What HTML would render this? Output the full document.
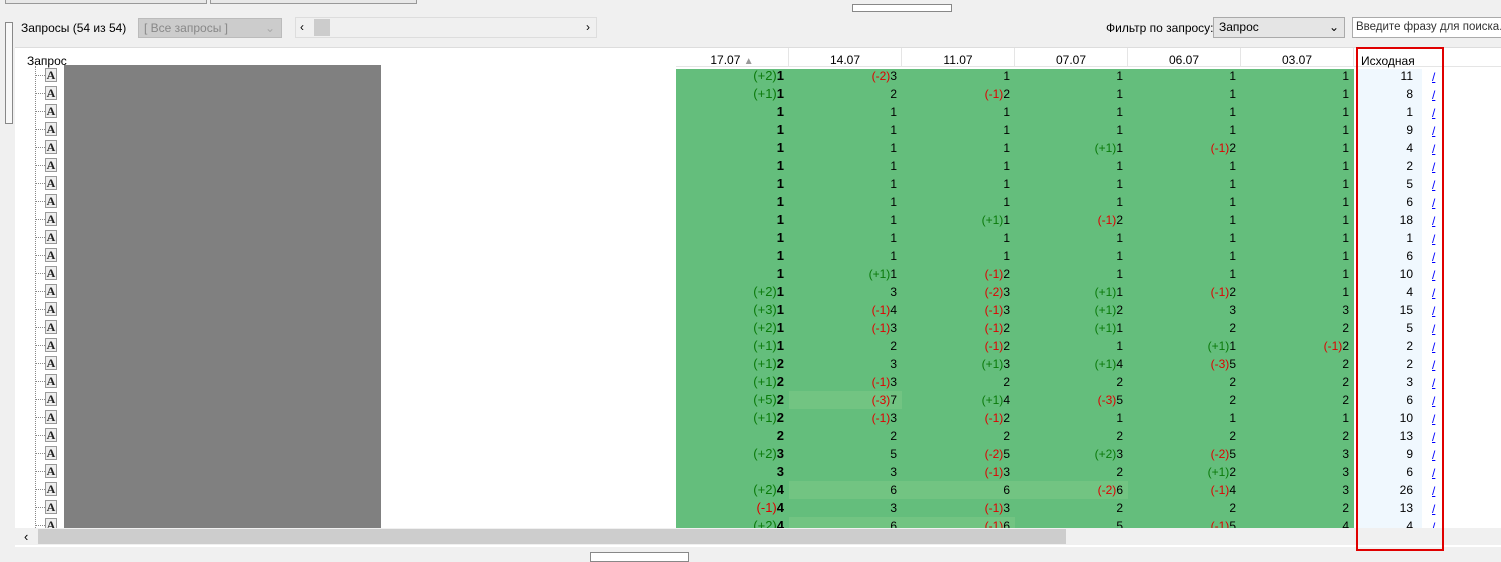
<!DOCTYPE html><html><head><meta charset="utf-8"><style>
body{margin:0;width:1501px;height:557px;background:#f0f0f0;font-family:"Liberation Sans",sans-serif;font-size:12px;position:relative;overflow:hidden}
.a{position:absolute;white-space:nowrap}
.cell{position:absolute;height:18px;line-height:18px;text-align:right;padding-right:5px;box-sizing:border-box;white-space:nowrap}
.g{color:#0a7a0a}.r{color:#e00000}
</style></head><body>
<div class="a" style="left:5px;top:0;width:200px;height:3px;border:1px solid #999;border-top:none;background:#e8e8e8"></div>
<div class="a" style="left:210px;top:0;width:205px;height:3px;border:1px solid #999;border-top:none;background:#e8e8e8"></div>
<div class="a" style="left:852px;top:4px;width:98px;height:6px;border:1px solid #888;background:#fff"></div>
<div class="a" style="left:5px;top:22px;width:6px;height:100px;border:1px solid #888;background:#f8f8f8"></div>
<div class="a" style="left:21px;top:21px">Запросы (54 из 54)</div>
<div class="a" style="left:138px;top:18px;width:144px;height:20px;background:#ccc;border:1px solid #bbb;box-sizing:border-box;color:#888;line-height:18px;padding-left:5px">[ Все запросы ]<span style="position:absolute;right:6px;color:#aaa">⌄</span></div>
<div class="a" style="left:295px;top:17px;width:302px;height:21px;background:#f0f0f0;border:1px solid #ddd;box-sizing:border-box"><span class="a" style="left:4px;top:2px">‹</span><div class="a" style="left:18px;top:1px;width:16px;height:17px;background:#ccc"></div><span class="a" style="right:6px;top:2px">›</span></div>
<div class="a" style="left:1106px;top:21px">Фильтр по запросу:</div>
<div class="a" style="left:1213px;top:17px;width:132px;height:21px;background:#e5e5e5;border:1px solid #aaa;box-sizing:border-box;line-height:19px;padding-left:5px">Запрос<span style="position:absolute;right:5px">⌄</span></div>
<div class="a" style="left:1352px;top:17px;width:160px;height:21px;background:#fff;border:1px solid #aaa;box-sizing:border-box;line-height:19px;padding-left:3px;color:#333;overflow:hidden;font-size:11.5px">Введите фразу для поиска...</div>
<div class="a" style="left:15px;top:47px;width:1486px;height:499px;background:#fff;border-top:1px solid #ddd"></div>
<div class="a" style="left:27px;top:54px">Запрос</div>
<div class="a" style="left:64px;top:65px;width:317px;height:472px;background:#808080"></div>
<div id="icons"></div>
<div id="grid"></div>
<div class="a" style="left:15px;top:528px;width:1486px;height:17px;background:#f0f0f0"></div>
<div class="a" style="left:38px;top:529px;width:1028px;height:15px;background:#cdcdcd"></div>
<div class="a" style="left:24px;top:529px;font-size:13px">‹</div>
<div class="a" style="left:590px;top:552px;width:97px;height:8px;border:1px solid #888;background:#fff"></div>
<div class="a" style="left:1356px;top:47px;width:84px;height:500px;border:2px solid #e00000"></div>
<script>
const rows=[
["(+2)1","(-2)3","1","1","1","1","11"],["(+1)1","2","(-1)2","1","1","1","8"],["1","1","1","1","1","1","1"],["1","1","1","1","1","1","9"],
["1","1","1","(+1)1","(-1)2","1","4"],["1","1","1","1","1","1","2"],["1","1","1","1","1","1","5"],["1","1","1","1","1","1","6"],
["1","1","(+1)1","(-1)2","1","1","18"],["1","1","1","1","1","1","1"],["1","1","1","1","1","1","6"],["1","(+1)1","(-1)2","1","1","1","10"],
["(+2)1","3","(-2)3","(+1)1","(-1)2","1","4"],["(+3)1","(-1)4","(-1)3","(+1)2","3","3","15"],["(+2)1","(-1)3","(-1)2","(+1)1","2","2","5"],
["(+1)1","2","(-1)2","1","(+1)1","(-1)2","2"],["(+1)2","3","(+1)3","(+1)4","(-3)5","2","2"],["(+1)2","(-1)3","2","2","2","2","3"],
["(+5)2","(-3)7","(+1)4","(-3)5","2","2","6"],["(+1)2","(-1)3","(-1)2","1","1","1","10"],["2","2","2","2","2","2","13"],
["(+2)3","5","(-2)5","(+2)3","(-2)5","3","9"],["3","3","(-1)3","2","(+1)2","3","6"],["(+2)4","6","6","(-2)6","(-1)4","3","26"],
["(-1)4","3","(-1)3","2","2","2","13"],["(+2)4","6","(-1)6","5","(-1)5","4","4"]];
const light={"18-1":1,"23-1":1,"23-2":1,"23-3":1,"25-1":1,"25-2":1};
const cx=[676,789,902,1015,1128,1241,1354];
let h='<div class="a" style="left:676px;top:48px;width:825px;height:18px;border-bottom:1px solid #e5e5e5"></div>';
const hd=["17.07 ▲","14.07","11.07","07.07","06.07","03.07"];
hd.forEach((t,i)=>{h+=`<div class="a" style="left:${cx[i]}px;top:48px;width:113px;height:18px;line-height:24px;text-align:center;border-right:1px solid #e5e5e5;box-sizing:border-box">${t.replace("▲",'<span style="color:#999;font-size:10px">▲</span>')}</div>`});
h+='<div class="a" style="left:1361px;top:54px">Исходная</div>';
h+='<div class="a" style="left:676px;top:69px;width:678px;height:459px;background:#64be7c"></div>';
h+='<div class="a" style="left:1358px;top:69px;width:64px;height:459px;background:#f0f8fe"></div>';
let ic='';
rows.forEach((r,i)=>{const y=66+i*18;if(y>528)return;
 r.forEach((v,j)=>{const m=v.match(/^\(([+-]\d)\)(\d+)$/);let s=v;
  if(m)s=`<span class="${m[1][0]=='+'?'g':'r'}">(${m[1]})</span>${j==0?'<b>'+m[2]+'</b>':m[2]}`;else if(j==0)s='<b>'+v+'</b>';
  let bg=light[i+'-'+j]?'background:#72c482;':'';
  if(j<6)h+=`<div class="cell" style="left:${cx[j]}px;top:${y+1}px;width:113px;${bg}${j==0?'font-size:13px;':''}">${s}</div>`;
  else h+=`<div class="cell" style="left:1358px;top:${y+1}px;width:60px;">${v}</div>`;});
 h+=`<div class="a" style="left:1432px;top:${y+2}px;line-height:18px;color:#00f;text-decoration:underline">/</div>`;
 ic+=`<div class="a" style="left:35px;top:${y+9}px;width:10px;border-top:1px dotted #888"></div><div class="a" style="left:45px;top:${y+2}px;width:12px;height:14px;background:#eee;border:1px solid #999;box-sizing:border-box;font:bold 12px 'Liberation Serif',serif;line-height:13px;text-align:center;color:#222">A</div>`;});
ic='<div class="a" style="left:35px;top:66px;height:462px;border-left:1px dotted #888"></div>'+ic;
document.getElementById('grid').innerHTML=h;document.getElementById('icons').innerHTML=ic;
</script></body></html>
